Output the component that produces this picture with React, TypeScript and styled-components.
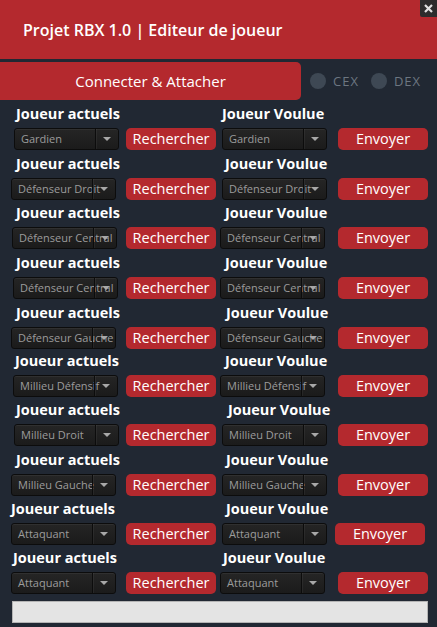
import styled, { createGlobalStyle } from 'styled-components';

const GlobalStyle = createGlobalStyle`
  html,
  body {
    margin: 0;
    padding: 0;
    background: #212833;
  }

  body {
    width: 437px;
    height: 627px;
    overflow: hidden;
    font-family: 'Open Sans', 'Noto Sans', sans-serif;
  }
`;

const RED = '#b4292e';

const Window = styled.div`
  display: flex;
  flex-direction: column;
  width: 437px;
  height: 627px;
`;

const Header = styled.header`
  position: relative;
  display: flex;
  align-items: center;
  height: 59px;
  padding-left: 23px;
  background: ${RED};

  h1 {
    margin: 0;
    color: #fff;
    font-size: 16px;
    font-weight: 600;
  }
`;

const CloseButton = styled.button`
  position: absolute;
  top: 0;
  right: 0;
  display: flex;
  align-items: center;
  justify-content: center;
  width: 17px;
  height: 17px;
  padding: 0;
  border: none;
  border-bottom-left-radius: 2px;
  background: #2c2c2c;
`;

const ConnectBar = styled.section`
  display: flex;
  align-items: center;
  height: 38px;
  margin-top: 3px;
`;

const ConnectButton = styled.button`
  width: 301px;
  height: 38px;
  padding: 0;
  border: none;
  border-radius: 0 5px 5px 0;
  background: ${RED};
  color: #fff;
  font-family: inherit;
  font-size: 15px;
`;

const RadioOption = styled.label<{ $gap: number }>`
  display: flex;
  align-items: center;
  gap: 7px;
  margin-left: ${(p) => p.$gap}px;
  color: #6c7681;
  font-size: 13px;
  letter-spacing: 1px;

  span {
    width: 16px;
    height: 16px;
    border-radius: 50%;
    background: #3e4854;
  }
`;

const RowList = styled.main`
  padding-top: 4px;
`;

const Row = styled.div<{ $h: number }>`
  display: grid;
  grid-template-columns: 217px 220px;
  height: ${(p) => p.$h}px;
`;

const Panel = styled.div`
  display: flex;
  flex-direction: column;
`;

const FieldLabel = styled.div<{ $x: number }>`
  height: 20px;
  margin: 0 0 4px ${(p) => p.$x}px;
  color: #fff;
  font-size: 14.5px;
  font-weight: 700;
  line-height: 20px;
  white-space: nowrap;
`;

const Controls = styled.div<{ $cell: number }>`
  display: grid;
  grid-template-columns: ${(p) => p.$cell}px 90px;
`;

const Select = styled.div<{ $x: number }>`
  position: relative;
  box-sizing: border-box;
  width: 105px;
  height: 22px;
  margin-left: ${(p) => p.$x}px;
  padding-left: 6px;
  border: 1px solid #0c0c0c;
  border-radius: 3px;
  background: linear-gradient(#252525, #1b1b1b);
  box-shadow: inset 0 1px 0 rgba(255, 255, 255, 0.05);
  overflow: hidden;
  color: #9c9c9c;
  font-size: 11px;
  line-height: 20px;
  white-space: nowrap;
`;

const Arrow = styled.span`
  position: absolute;
  top: 0;
  right: 0;
  bottom: 0;
  display: flex;
  align-items: center;
  justify-content: center;
  width: 22px;
  border-left: 1px solid #0c0c0c;
  box-shadow: inset 1px 0 0 rgba(255, 255, 255, 0.05);
`;

const ActionButton = styled.button<{ $dx?: number }>`
  width: 90px;
  height: 22px;
  margin-left: ${(p) => p.$dx ?? 0}px;
  padding: 0;
  border: none;
  border-radius: 5px;
  background: ${RED};
  color: #fff;
  font-family: inherit;
  font-size: 14.5px;
  line-height: 22px;
`;

const StatusBar = styled.div`
  box-sizing: border-box;
  width: 416px;
  height: 22px;
  margin: 7px 0 0 12px;
  border: 1px solid #b4b4b4;
  background: #e4e4e4;
`;

type Side = { label: number; select: number; value: string; dx?: number };
type RowData = { h: number; left: Side; right: Side };

const rows: RowData[] = [
  { h: 50, left: { label: 16, select: 14, value: 'Gardien' }, right: { label: 5, select: 5, value: 'Gardien' } },
  { h: 49, left: { label: 16, select: 11, value: 'Défenseur Droit' }, right: { label: 8, select: 5, value: 'Défenseur Droit' } },
  { h: 50, left: { label: 16, select: 12, value: 'Défenseur Central' }, right: { label: 8, select: 3, value: 'Défenseur Central' } },
  { h: 50, left: { label: 16, select: 13, value: 'Défenseur Central' }, right: { label: 8, select: 3, value: 'Défenseur Central' } },
  { h: 48, left: { label: 16, select: 11, value: 'Défenseur Gauche' }, right: { label: 9, select: 3, value: 'Défenseur Gauche' } },
  { h: 49, left: { label: 15, select: 13, value: 'Millieu Défensif' }, right: { label: 8, select: 3, value: 'Millieu Défensif' } },
  { h: 50, left: { label: 16, select: 14, value: 'Millieu Droit' }, right: { label: 11, select: 5, value: 'Millieu Droit' } },
  { h: 49, left: { label: 16, select: 11, value: 'Millieu Gauche' }, right: { label: 9, select: 5, value: 'Millieu Gauche' } },
  { h: 49, left: { label: 11, select: 11, value: 'Attaquant' }, right: { label: 9, select: 5, value: 'Attaquant', dx: -3 } },
  { h: 46, left: { label: 13, select: 11, value: 'Attaquant' }, right: { label: 6, select: 3, value: 'Attaquant' } },
];

const Dropdown = ({ x, value }: { x: number; value: string }) => (
  <Select $x={x}>
    {value}
    <Arrow>
      <svg width="8" height="4" viewBox="0 0 8 4">
        <path d="M0 0H8L4 4Z" fill="#a8a8a8" />
      </svg>
    </Arrow>
  </Select>
);

const App = () => (
  <Window>
    <GlobalStyle />
    <Header>
      <h1>Projet RBX 1.0 | Editeur de joueur</h1>
      <CloseButton type="button" aria-label="Fermer">
        <svg width="9" height="9" viewBox="0 0 9 9">
          <path d="M1 1L8 8M8 1L1 8" stroke="#e0e0e0" strokeWidth="2.2" />
        </svg>
      </CloseButton>
    </Header>
    <ConnectBar>
      <ConnectButton type="button">Connecter &amp; Attacher</ConnectButton>
      <RadioOption $gap={9}>
        <span />
        CEX
      </RadioOption>
      <RadioOption $gap={12}>
        <span />
        DEX
      </RadioOption>
    </ConnectBar>
    <RowList>
      {rows.map((row, i) => (
        <Row key={i} $h={row.h}>
          <Panel>
            <FieldLabel $x={row.left.label}>Joueur actuels</FieldLabel>
            <Controls $cell={126}>
              <Dropdown x={row.left.select} value={row.left.value} />
              <ActionButton type="button" $dx={row.left.dx}>
                Rechercher
              </ActionButton>
            </Controls>
          </Panel>
          <Panel>
            <FieldLabel $x={row.right.label}>Joueur Voulue</FieldLabel>
            <Controls $cell={121}>
              <Dropdown x={row.right.select} value={row.right.value} />
              <ActionButton type="button" $dx={row.right.dx}>
                Envoyer
              </ActionButton>
            </Controls>
          </Panel>
        </Row>
      ))}
    </RowList>
    <StatusBar />
  </Window>
);

export default App;
